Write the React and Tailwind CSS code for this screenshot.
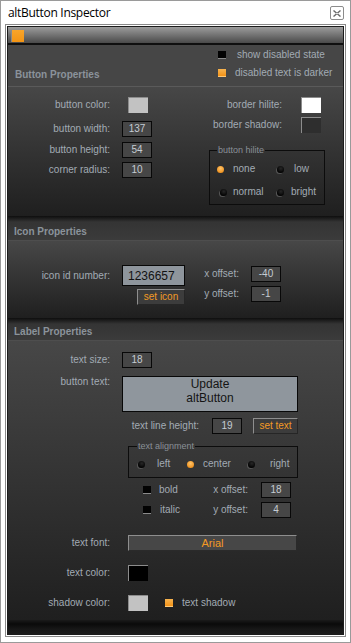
import React from "react";

const LBL = "text-[10px] leading-[12px] text-[#a2abb4] whitespace-nowrap";

function Label({ children, className }) {
  return <div className={`${LBL} text-right ${className}`}>{children}</div>;
}

function NumBox({ children, className = "" }) {
  return (
    <div
      className={`w-[30px] h-[16px] border border-[#080808] bg-[#464646] text-[10px] leading-[14px] text-[#c5ccd3] flex items-center justify-center ${className}`}
    >
      {children}
    </div>
  );
}

function Swatch({ color, className = "" }) {
  return (
    <div
      className={`w-[20px] h-[16px] border-t border-l border-t-[#8c8c8c] border-l-[#8c8c8c] ${color} ${className}`}
    />
  );
}

function Check({ on, className = "" }) {
  return on ? (
    <div
      className={`w-[8px] h-[8px] shrink-0 bg-[linear-gradient(to_bottom,#f6b350,#f39318)] border-b border-b-[#ffc978] ${className}`}
    />
  ) : (
    <div
      className={`w-[8px] h-[8px] shrink-0 bg-[#030303] border-b border-b-[#8a8a8a] ${className}`}
    />
  );
}

function Radio({ on, className = "" }) {
  return on ? (
    <div
      className={`w-[7px] h-[7px] shrink-0 rounded-full bg-[radial-gradient(circle_at_50%_35%,#ffc46a,#f0921e_75%)] ${className}`}
    />
  ) : (
    <div
      className={`w-[7px] h-[7px] shrink-0 rounded-full bg-[radial-gradient(circle_at_55%_35%,#262626,#000000_75%)] shadow-[-1px_1px_0_#555555] ${className}`}
    />
  );
}

function OrangeBtn({ children, className = "" }) {
  return (
    <div
      className={`h-[16px] bg-[#3c3c3c] border-t border-l border-t-[#8e8e8e] border-l-[#8e8e8e] border-b border-r border-b-[#262626] border-r-[#262626] text-[10px] leading-[12px] text-[#f39a25] flex items-center justify-center ${className}`}
    >
      {children}
    </div>
  );
}

function SectionHeader({ children, className }) {
  return (
    <div
      className={`bg-[linear-gradient(to_bottom,#0e0e0e_0px,#343434_6px,#3b3b3b_100%)] pl-[6px] text-[10px] leading-[12px] font-bold text-[#8b939b] ${className}`}
    >
      {children}
    </div>
  );
}

const BODY = "bg-[linear-gradient(to_bottom,#474747,#1f1f1f)]";

export default function App() {
  return (
    <div className="w-[351px] h-[643px] bg-white border border-[#9a9a9a] flex flex-col font-['Liberation_Sans',Arial,sans-serif] overflow-hidden">
      {/* title bar */}
      <div className="h-[23px] shrink-0 flex items-start justify-between">
        <div className="pl-[7px] pt-[4px] text-[12px] leading-[16px] tracking-[-0.3px] text-black font-['Open_Sans',sans-serif]">
          altButton Inspector
        </div>
        <div className="mt-[5px] mr-[6px] w-[14px] h-[14px] rounded-[2px] border border-[#8c8c8c] flex items-center justify-center">
          <svg width="8" height="7" viewBox="0 0 8 7">
            <path
              d="M0.5 0.5 L7.5 6.5 M7.5 0.5 L0.5 6.5"
              stroke="#6a6a6a"
              strokeWidth="1.4"
              fill="none"
            />
            <path d="M3 3.5 L5 3.5" stroke="#ffffff" strokeWidth="0.8" />
          </svg>
        </div>
      </div>

      {/* frame */}
      <div className="mx-[4px] mb-[5px] flex-1 border border-[#8a8a8a] p-[1px] bg-white flex flex-col">
        <div className="flex-1 border border-[#1c1c1c] flex flex-col bg-[#1e1e1e]">
          {/* top strip */}
          <div className="h-[16px] shrink-0 bg-[linear-gradient(to_bottom,#9c9c9c,#4a4a4a)] pl-[3px] pt-[3px]">
            <div className="w-[13px] h-[12px] bg-[linear-gradient(to_bottom,#f9a52a,#f39414)] border-l border-l-[#8a8a8a]" />
          </div>
          <div className="h-[2px] shrink-0 bg-[#0f0f0f]" />

          {/* Button properties header */}
          <div className="h-[41px] shrink-0 bg-[#464646] flex">
            <div className="w-[210px] flex items-end pl-[7px] pb-[5px] text-[10px] leading-[12px] font-bold text-[#8b939b]">
              Button Properties
            </div>
            <div className="flex flex-col pt-[4px] gap-[6px]">
              <div className="flex items-center h-[12px]">
                <Check on={false} />
                <span className={`${LBL} ml-[11px]`}>show disabled state</span>
              </div>
              <div className="flex items-center h-[12px]">
                <Check on />
                <span className={`${LBL} ml-[9px]`}>disabled text is darker</span>
              </div>
            </div>
          </div>
          <div className="h-[1px] shrink-0 bg-[#5a5a5a]" />

          {/* Button properties body */}
          <div className={`h-[129px] shrink-0 ${BODY} flex`}>
            <div className="w-[192px] flex flex-col pt-[10px]">
              <div className="flex items-center h-[16px]">
                <Label className="w-[102px]">button color:</Label>
                <Swatch color="bg-[#c2c2c2]" className="ml-[18px]" />
              </div>
              <div className="flex items-center h-[16px] mt-[8px]">
                <Label className="w-[102px]">button width:</Label>
                <NumBox className="ml-[12px]">137</NumBox>
              </div>
              <div className="flex items-center h-[16px] mt-[5px]">
                <Label className="w-[102px]">button height:</Label>
                <NumBox className="ml-[12px]">54</NumBox>
              </div>
              <div className="flex items-center h-[16px] mt-[4px]">
                <Label className="w-[102px]">corner radius:</Label>
                <NumBox className="ml-[12px]">10</NumBox>
              </div>
            </div>
            <div className="flex flex-col pt-[10px]">
              <div className="flex items-center h-[16px]">
                <Label className="w-[82px]">border hilite:</Label>
                <Swatch color="bg-white" className="ml-[19px]" />
              </div>
              <div className="flex items-center h-[16px] mt-[4px]">
                <Label className="w-[82px]">border shadow:</Label>
                <Swatch color="bg-[#2e2e2e]" className="ml-[19px] border-t-[#4a4a4a] border-l-[#4a4a4a]" />
              </div>
              <fieldset className="ml-[9px] mt-[12px] w-[116px] h-[60px] border border-[#0c0c0c] pt-[8px]">
                <legend className="ml-[7px] px-[1px] text-[9px] leading-[10px] text-[#8a9097]">
                  button hilite
                </legend>
                <div className="grid grid-cols-[60px_1fr] gap-y-[11px]">
                  <div className="flex items-center h-[12px] pl-[7px]">
                    <Radio on />
                    <span className={`${LBL} ml-[9px]`}>none</span>
                  </div>
                  <div className="flex items-center h-[12px] pl-[7px]">
                    <Radio />
                    <span className={`${LBL} ml-[10px]`}>low</span>
                  </div>
                  <div className="flex items-center h-[12px] pl-[10px]">
                    <Radio />
                    <span className={`${LBL} ml-[6px]`}>normal</span>
                  </div>
                  <div className="flex items-center h-[12px] pl-[7px]">
                    <Radio />
                    <span className={`${LBL} ml-[7px]`}>bright</span>
                  </div>
                </div>
              </fieldset>
            </div>
          </div>

          {/* Icon properties */}
          <SectionHeader className="h-[24px] shrink-0 pt-[10px]">Icon Properties</SectionHeader>
          <div className="h-[1px] shrink-0 bg-[#4e4e4e]" />
          <div className={`h-[77px] shrink-0 ${BODY} flex`}>
            <div className="w-[177px] flex flex-col pt-[24px]">
              <div className="flex items-center h-[21px]">
                <Label className="w-[102px]">icon id number:</Label>
                <div className="ml-[12px] w-[63px] h-[21px] border border-[#080808] bg-[#8e959c] pl-[5px] flex items-center text-[12px] leading-[14px] text-[#121212]">
                  1236657
                </div>
              </div>
              <OrangeBtn className="mt-[3px] ml-[129px] w-[48px]">set icon</OrangeBtn>
            </div>
            <div className="flex flex-col pt-[25px]">
              <div className="flex items-center h-[16px]">
                <Label className="w-[54px]">x offset:</Label>
                <NumBox className="ml-[12px]">-40</NumBox>
              </div>
              <div className="flex items-center h-[16px] mt-[4px]">
                <Label className="w-[54px]">y offset:</Label>
                <NumBox className="ml-[12px]">-1</NumBox>
              </div>
            </div>
          </div>

          {/* Label properties */}
          <SectionHeader className="h-[22px] shrink-0 pt-[8px]">Label Properties</SectionHeader>
          <div className="h-[1px] shrink-0 bg-[#4e4e4e]" />
          <div className={`h-[279px] shrink-0 ${BODY} flex flex-col pt-[11px]`}>
            <div className="flex items-center h-[16px]">
              <Label className="w-[102px]">text size:</Label>
              <NumBox className="ml-[12px]">18</NumBox>
            </div>
            <div className="flex items-start mt-[8px]">
              <Label className="w-[102px]">button text:</Label>
              <div className="ml-[12px] w-[176px] h-[36px] border border-[#080808] bg-[#8f969d] text-center text-[12px] leading-[14px] text-[#141414]">
                Update
                <br />
                altButton
              </div>
            </div>
            <div className="flex items-center h-[16px] mt-[6px]">
              <Label className="w-[191px]">text line height:</Label>
              <NumBox className="ml-[13px]">19</NumBox>
              <OrangeBtn className="ml-[11px] w-[45px]">set text</OrangeBtn>
            </div>
            <fieldset className="ml-[120px] mt-[7px] w-[170px] h-[37px] border border-[#0c0c0c] pt-[7px]">
              <legend className="ml-[8px] px-[1px] text-[9px] leading-[10px] text-[#8a9097]">
                text alignment
              </legend>
              <div className="grid grid-cols-[49px_61px_1fr]">
                <div className="flex items-center h-[12px] pl-[9px]">
                  <Radio />
                  <span className={`${LBL} ml-[12px]`}>left</span>
                </div>
                <div className="flex items-center h-[12px] pl-[9px]">
                  <Radio on />
                  <span className={`${LBL} ml-[9px]`}>center</span>
                </div>
                <div className="flex items-center h-[12px] pl-[9px]">
                  <Radio />
                  <span className={`${LBL} ml-[15px]`}>right</span>
                </div>
              </div>
            </fieldset>
            <div className="flex items-center h-[16px] mt-[4px]">
              <div className="ml-[135px] w-[105px] flex items-center">
                <Check on={false} />
                <span className={`${LBL} ml-[8px]`}>bold</span>
                <span className={`${LBL} ml-auto`}>x offset:</span>
              </div>
              <NumBox className="ml-[13px]">18</NumBox>
            </div>
            <div className="flex items-center h-[16px] mt-[4px]">
              <div className="ml-[135px] w-[105px] flex items-center">
                <Check on={false} />
                <span className={`${LBL} ml-[9px]`}>italic</span>
                <span className={`${LBL} ml-auto`}>y offset:</span>
              </div>
              <NumBox className="ml-[13px]">4</NumBox>
            </div>
            <div className="flex items-center h-[16px] mt-[17px]">
              <Label className="w-[102px]">text font:</Label>
              <div className="ml-[18px] w-[169px] h-[16px] bg-[#474747] border-t border-l border-t-[#8e8e8e] border-l-[#8e8e8e] border-b border-r border-b-[#2a2a2a] border-r-[#2a2a2a] flex items-center justify-center text-[11px] leading-[12px] text-[#f39a25]">
                Arial
              </div>
            </div>
            <div className="flex items-center h-[16px] mt-[14px]">
              <Label className="w-[102px]">text color:</Label>
              <Swatch color="bg-black" className="ml-[18px]" />
            </div>
            <div className="flex items-center h-[16px] mt-[14px]">
              <Label className="w-[102px]">shadow color:</Label>
              <Swatch color="bg-[#c2c2c2]" className="ml-[18px]" />
              <Check on className="ml-[17px]" />
              <span className={`${LBL} ml-[9px]`}>text shadow</span>
            </div>
          </div>
          <div className="flex-1 bg-[linear-gradient(to_bottom,#1a1a1a_0px,#0a0a0a_4px,#171717_9px,#1c1c1c_100%)]" />
        </div>
      </div>
    </div>
  );
}
